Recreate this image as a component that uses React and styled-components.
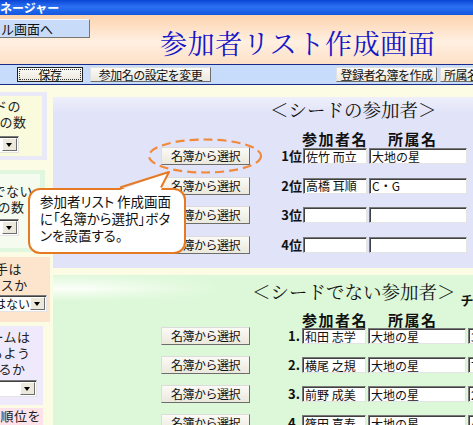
import React from 'react';
import styled, { createGlobalStyle } from 'styled-components';

const JP = '"Noto Sans CJK JP", "Noto Sans", sans-serif';

const GlobalStyle = createGlobalStyle`
  html, body { margin: 0; padding: 0; }
  body {
    width: 473px;
    height: 425px;
    overflow: hidden;
    background: #fcfce4;
    font-family: ${JP};
    color: #111;
  }
`;

const seedRows = [
  { label: '1位', name: '佐竹 而立', team: '大地の星' },
  { label: '2位', name: '高橋 耳順', team: 'C・G' },
  { label: '3位', name: '', team: '' },
  { label: '4位', name: '', team: '' },
];

const otherRows = [
  { label: '1.', name: '和田 志学', team: '大地の星', extra: '3' },
  { label: '2.', name: '横尾 之規', team: '大地の星', extra: '7' },
  { label: '3.', name: '前野 成美', team: '大地の星', extra: '2' },
  { label: '4.', name: '篠田 喜寿', team: '大地の星', extra: '4' },
];

const App = () => {
  return (
    <Page>
      <GlobalStyle />
      <TitleBar>
        <TitleText>マネージャー</TitleText>
      </TitleBar>
      <Header>
        <NavButton>タイトル画面へ</NavButton>
        <PageTitle>参加者リスト作成画面</PageTitle>
      </Header>
      <Toolbar>
        <ToolButton $w={66} $gap={17} $focus>保存</ToolButton>
        <ToolButton $w={121} $gap={7}>参加名の設定を変更</ToolButton>
        <ToolButton $w={101} $gap={125}>登録者名簿を作成</ToolButton>
        <ToolButton $w={80} $gap={3} $left>所属名簿を作成</ToolButton>
      </Toolbar>
      <Body>
        <LeftPanel>
          <Frame $w={47} $h={68} $mb={10} $bg="#e9e9f8">
            <Inner $w={42} $bg="#fafadc" $pt={2}>
              <Line $shift={-33}>シードの</Line>
              <Line $shift={-41}>参加者の数</Line>
              <FakeSelect $shift={-40} $w={59} $mt={6} />
            </Inner>
          </Frame>
          <Frame $w={45} $h={82} $mb={5} $bg="#e0f6de">
            <Inner $w={40} $bg="#f5fbef" $pt={9}>
              <Line $shift={-48}>シードでない</Line>
              <Line $shift={-43}>参加者の数</Line>
              <FakeSelect $shift={-40} $w={59} $mt={4} />
            </Inner>
          </Frame>
          <Box $w={50} $h={65} $mb={4} $bg="#fde4cc" $pt={4}>
            <Line $shift={-59}>シード選手は</Line>
            <Line $shift={-26}>クラスか</Line>
            <FakeSelect $shift={-21} $w={68} $mt={2} text="ではない" />
          </Box>
          <Box $w={43} $h={79} $mb={3} $bg="#eee9fb" $pt={3}>
            <Line $shift={-23}>チームは</Line>
            <Line $shift={-37}>離れるよう</Line>
            <Line $shift={-15}>するか</Line>
            <FakeSelect $shift={-20} $w={57} $mt={3} />
          </Box>
          <Box $w={43} $h={20} $mb={0} $bg="#fde2ea" $pt={0}>
            <Line $shift={-13}>の順位を</Line>
          </Box>
        </LeftPanel>
        <Main>
          <SeedPanel>
            <Heading $pl={217}>＜シードの参加者＞</Heading>
            <ColHeads $mt={11}>
              <ColHead $w={86}>参加者名</ColHead>
              <ColHead>所属名</ColHead>
            </ColHeads>
            <Rows $gap={11.5} $mt={1}>
              {seedRows.map((r, i) => (
                <Row key={i}>
                  <PickButton>名簿から選択</PickButton>
                  <RankLabel $pr={0}>{r.label}</RankLabel>
                  <Field $w={64} $ml={1} value={r.name} readOnly />
                  <Field $w={98} $ml={2} value={r.team} readOnly />
                </Row>
              ))}
            </Rows>
          </SeedPanel>
          <OtherPanel>
            <HeadRow>
              <Heading $pl={199}>＜シードでない参加者＞</Heading>
              <SmallHead>チーム</SmallHead>
            </HeadRow>
            <ColHeads $mt={10}>
              <ColHead $w={86}>参加者名</ColHead>
              <ColHead>所属名</ColHead>
            </ColHeads>
            <Rows $gap={11} $mt={0}>
              {otherRows.map((r, i) => (
                <Row key={i}>
                  <PickButton>名簿から選択</PickButton>
                  <RankLabel $pr={2}>{r.label}</RankLabel>
                  <Field $w={64} $ml={0} value={r.name} readOnly />
                  <Field $w={98} $ml={2} value={r.team} readOnly />
                  <Field $w={60} $ml={2} value={r.extra} readOnly />
                </Row>
              ))}
            </Rows>
          </OtherPanel>
        </Main>
      </Body>

      <Ellipse width="118" height="40" viewBox="0 0 118 40">
        <ellipse cx="59" cy="19" rx="56" ry="16.5" fill="none" stroke="#f08a3a" strokeWidth="2.2" strokeDasharray="9 5" />
      </Ellipse>
      <Callout>
        参加者リスト 作成画面
        <br />
        に「名簿から選択」ボタ
        <br />
        ンを設置する。
      </Callout>
      <Tail width="60" height="26" viewBox="0 0 60 26">
        <polygon points="6,22 55,4 47,22" fill="#fff" />
        <polyline points="6,19.5 55,4 47,19.5" fill="none" stroke="#e67a22" strokeWidth="2" strokeLinejoin="round" />
      </Tail>
    </Page>
  );
};

export default App;

const FakeSelect = ({ $shift, $w, $mt, text }) => (
  <SelectBox $shift={$shift} $w={$w} $mt={$mt}>
    <SelectText>{text}</SelectText>
    <SelectArrow />
  </SelectBox>
);

const Page = styled.div`
  position: relative;
  width: 473px;
  height: 425px;
  overflow: hidden;
`;

const TitleBar = styled.div`
  display: flex;
  align-items: center;
  height: 15px;
  overflow: hidden;
  white-space: nowrap;
  background: linear-gradient(#0a45d4, #2c70f2 45%, #1256e0);
`;

const TitleText = styled.span`
  flex: none;
  margin-left: -12px;
  font-size: 12px;
  line-height: 15px;
  font-weight: bold;
  color: #fff;
`;

const Header = styled.div`
  height: 49px;
  display: flex;
  align-items: flex-start;
  background: linear-gradient(#fcd3ae, #fff0e2 55%, #fde0c6);
`;

const NavButton = styled.button`
  flex: none;
  margin: 4px 0 0 -44px;
  width: 134px;
  height: 19px;
  padding: 0 0 0 5px;
  text-align: left;
  font: 13px/17px ${JP};
  color: #111;
  background: #c8dcfa;
  border: 1px solid;
  border-color: #f4f8ff #777 #777 #f4f8ff;
`;

const PageTitle = styled.h1`
  margin: 13px 0 0 70px;
  font: 27px/30px "Noto Serif CJK JP", ${JP};
  letter-spacing: 0.6px;
  font-weight: normal;
  color: #1616c8;
  white-space: nowrap;
`;

const Toolbar = styled.div`
  height: 19px;
  display: flex;
  align-items: center;
  white-space: nowrap;
  background: #c6dcfa;
  border-top: 1px solid #1a2a88;
  border-bottom: 1px solid #1a2a88;
`;

const ToolButton = styled.button`
  flex: none;
  width: ${p => p.$w}px;
  height: 15px;
  margin-left: ${p => p.$gap}px;
  padding: ${p => (p.$left ? '0 0 0 3px' : '0')};
  text-align: ${p => (p.$left ? 'left' : 'center')};
  font: 12px/13px ${JP};
  letter-spacing: -0.5px;
  color: #111;
  background: linear-gradient(#fbfaf6, #ebe8dc);
  border: 1px solid;
  border-color: ${p => (p.$focus ? '#222' : '#e0e0e0 #6d6d6d #6d6d6d #e0e0e0')};
  outline: ${p => (p.$focus ? '1px dotted #333' : 'none')};
  outline-offset: -3px;
`;

const Body = styled.div`
  display: flex;
  align-items: flex-start;
`;

const LeftPanel = styled.div`
  width: 53px;
  flex: none;
  overflow: hidden;
  padding-top: 7px;
  display: flex;
  flex-direction: column;
  align-items: flex-start;
`;

const Frame = styled.div`
  width: ${p => p.$w}px;
  height: ${p => p.$h}px;
  margin-bottom: ${p => p.$mb}px;
  padding: 4px 5px 4px 0;
  box-sizing: border-box;
  background: ${p => p.$bg};
`;

const Inner = styled.div`
  width: ${p => p.$w}px;
  height: 100%;
  padding-top: ${p => p.$pt}px;
  box-sizing: border-box;
  overflow: hidden;
  background: ${p => p.$bg};
`;

const Box = styled.div`
  width: ${p => p.$w}px;
  height: ${p => p.$h}px;
  margin-bottom: ${p => p.$mb}px;
  padding-top: ${p => p.$pt}px;
  box-sizing: border-box;
  overflow: hidden;
  background: ${p => p.$bg};
`;

const Line = styled.div`
  margin-left: ${p => p.$shift}px;
  white-space: nowrap;
  font-size: 13px;
  line-height: 16px;
  letter-spacing: 0.5px;
  color: #222;
`;

const SelectBox = styled.div`
  display: flex;
  align-items: center;
  justify-content: space-between;
  width: ${p => p.$w}px;
  height: 17px;
  margin: ${p => p.$mt}px 0 0 ${p => p.$shift}px;
  padding: 0 1px 0 1px;
  box-sizing: border-box;
  background: #fff;
  border: 1px solid;
  border-color: #7a7a7a #e4e4e4 #e4e4e4 #7a7a7a;
  box-shadow: inset 1px 1px #404040;
`;

const SelectText = styled.span`
  padding-left: 1px;
  white-space: nowrap;
  font-size: 12px;
  line-height: 14px;
  color: #111;
`;

const SelectArrow = styled.span`
  position: relative;
  flex: none;
  width: 15px;
  height: 13px;
  box-sizing: border-box;
  background: #ece9dc;
  border: 1px solid;
  border-color: #fff #6d6d6d #6d6d6d #fff;
  &::after {
    content: '';
    position: absolute;
    left: 3px;
    top: 4px;
    border-left: 3.5px solid transparent;
    border-right: 3.5px solid transparent;
    border-top: 4px solid #000;
  }
`;

const Main = styled.div`
  flex: 1;
  padding-top: 12px;
  display: flex;
  flex-direction: column;
  gap: 7px;
`;

const SeedPanel = styled.section`
  height: 171px;
  padding-top: 1px;
  box-sizing: border-box;
  background: linear-gradient(#eff0fb, #e1e3f8 16px);
`;

const OtherPanel = styled.section`
  height: 160px;
  padding-top: 5px;
  box-sizing: border-box;
  background:
    linear-gradient(90deg, rgba(220, 248, 216, 0) 30px, #dcf8d8 170px),
    linear-gradient(#e0f8dc 0, #fbfff8 14px, #dcf8d8 26px);
`;

const HeadRow = styled.div`
  display: flex;
  align-items: flex-end;
  white-space: nowrap;
`;

const Heading = styled.h2`
  margin: 0;
  padding-left: ${p => p.$pl}px;
  font: 18.5px/22px "Noto Serif CJK JP", ${JP};
  font-weight: normal;
  color: #111;
  white-space: nowrap;
`;

const SmallHead = styled.span`
  margin: 0 0 -5px 5px;
  font-size: 13px;
  line-height: 14px;
  font-weight: bold;
`;

const ColHeads = styled.div`
  display: flex;
  margin-top: ${p => p.$mt}px;
  padding-left: 249px;
`;

const ColHead = styled.div`
  width: ${p => (p.$w ? `${p.$w}px` : 'auto')};
  font-size: 15px;
  line-height: 15px;
  font-weight: bold;
  letter-spacing: 1.5px;
  white-space: nowrap;
`;

const Rows = styled.div`
  display: flex;
  flex-direction: column;
  gap: ${p => p.$gap}px;
  margin-top: ${p => p.$mt}px;
`;

const Row = styled.div`
  display: flex;
  align-items: center;
  height: 18px;
  padding-left: 108px;
  white-space: nowrap;
`;

const PickButton = styled.button`
  flex: none;
  width: 89px;
  height: 18px;
  padding: 0;
  font: 12px/16px ${JP};
  letter-spacing: -0.5px;
  color: #111;
  background: linear-gradient(#fbfaf6, #ebe8dc);
  border: 1px solid;
  border-color: #dcdcdc #6d6d6d #6d6d6d #dcdcdc;
`;

const RankLabel = styled.span`
  flex: none;
  width: 52px;
  padding-right: ${p => p.$pr}px;
  box-sizing: border-box;
  text-align: right;
  font-size: 13px;
  line-height: 16px;
  font-weight: bold;
`;

const Field = styled.input`
  flex: none;
  width: ${p => p.$w}px;
  height: 16px;
  margin: 0 0 0 ${p => p.$ml}px;
  padding: 0 2px;
  box-sizing: border-box;
  font: 12px/13px ${JP};
  color: #111;
  background: #fff;
  border: 1px solid;
  border-color: #7a7a7a #e4e4e4 #e4e4e4 #7a7a7a;
  box-shadow: inset 1px 1px #404040;
  outline: none;
`;

const Ellipse = styled.svg`
  position: absolute;
  left: 146px;
  top: 137px;
`;

const Callout = styled.div`
  position: absolute;
  left: 28px;
  top: 188px;
  width: 158px;
  height: 66px;
  padding: 3px 0 0 10px;
  box-sizing: border-box;
  background: #fff;
  border: 2px solid #e67a22;
  border-radius: 12px;
  font-size: 13.5px;
  line-height: 17px;
  font-feature-settings: "palt";
  color: #111;
  white-space: nowrap;
`;

const Tail = styled.svg`
  position: absolute;
  left: 114px;
  top: 168px;
  overflow: visible;
`;
